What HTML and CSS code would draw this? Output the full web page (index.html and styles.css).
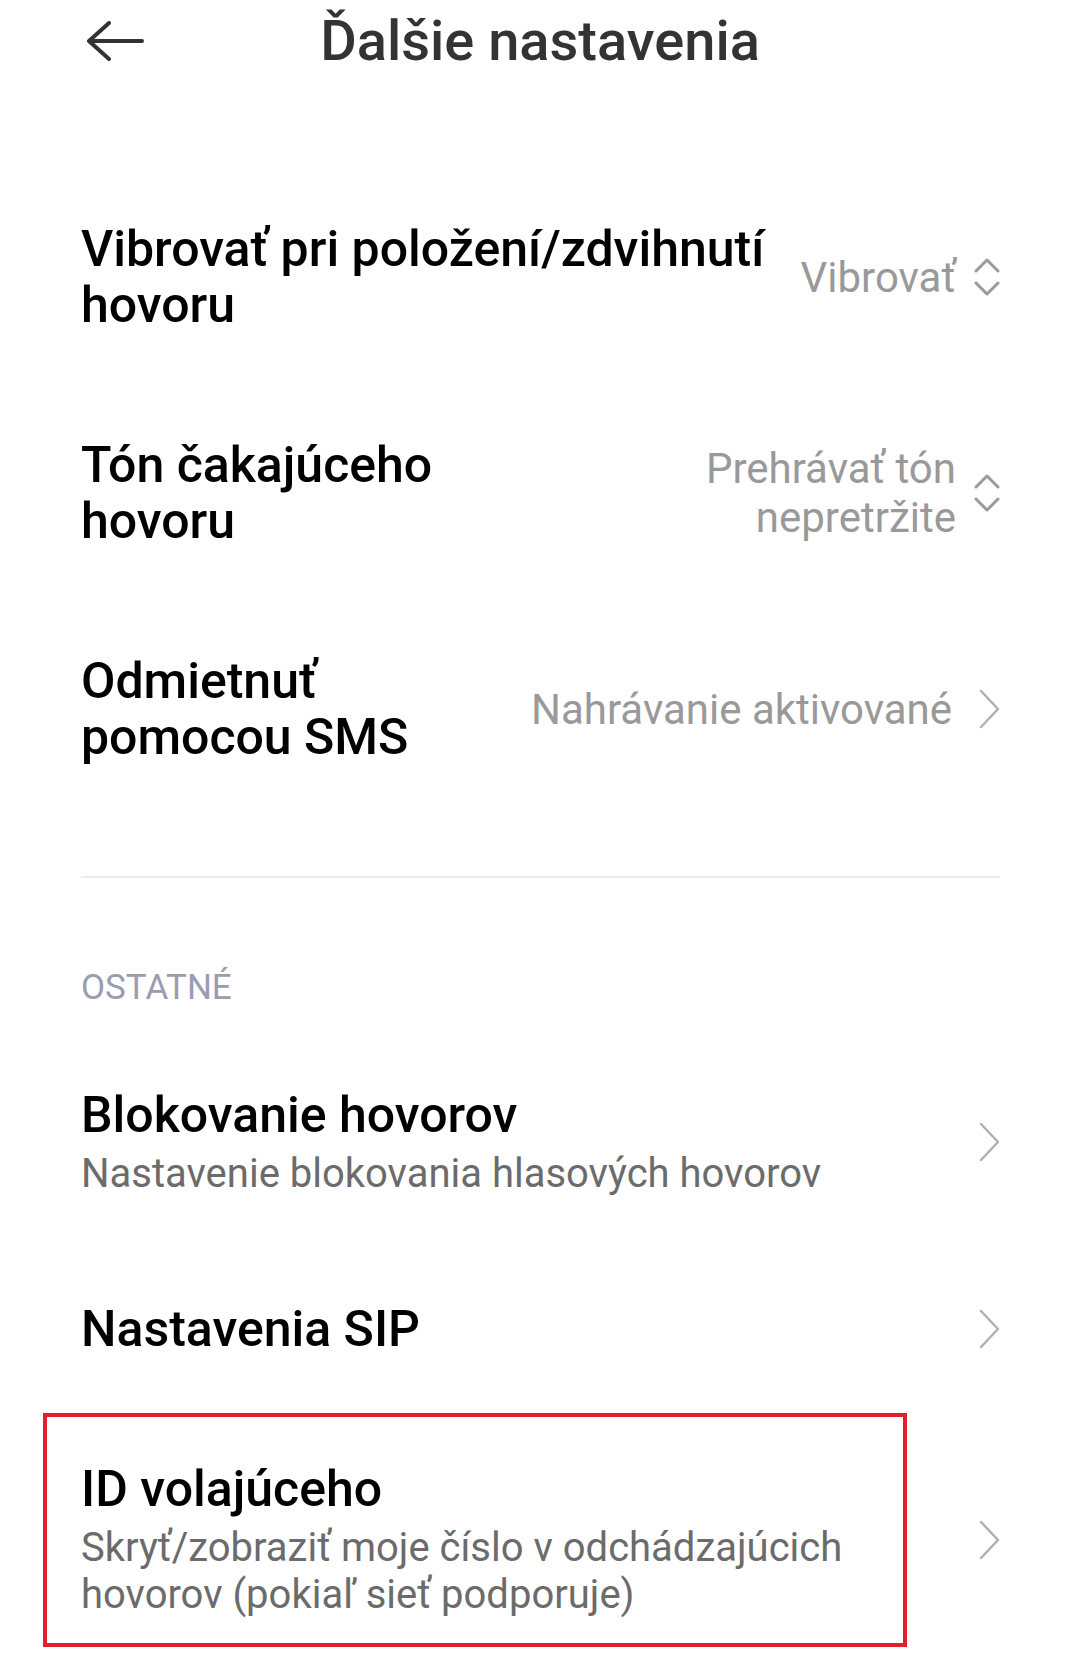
FILE: index.html
```html
<!DOCTYPE html>
<html lang="sk">
<head>
    <meta charset="UTF-8">
    <meta name="viewport" content="width=device-width, initial-scale=1.0">
    <title>Ďalšie nastavenia</title>
    <link rel="stylesheet" href="styles.css">
</head>
<body>
    <header class="topbar">
        <button class="back" aria-label="Späť">
            <svg width="58" height="40" viewBox="0 0 58 40">
                <path d="M3 20 H56 M23 2 L3 20 L23 38" fill="none" stroke="#333" stroke-width="4" stroke-linecap="round" stroke-linejoin="round"/>
            </svg>
        </button>
        <h1 class="page-title">Ďalšie nastavenia</h1>
        <span></span>
    </header>

    <main class="settings">
        <div class="row">
            <div class="row-text">
                <div class="row-title">Vibrovať pri položení/zdvihnutí<br>hovoru</div>
            </div>
            <div class="row-value">Vibrovať</div>
            <svg class="icon updown" viewBox="0 0 26 40">
                <path d="M2 14 L13 3 L24 14 M2 26 L13 37 L24 26" fill="none" stroke="#9a9a9a" stroke-width="3" stroke-linecap="round" stroke-linejoin="round"/>
            </svg>
        </div>

        <div class="row">
            <div class="row-text">
                <div class="row-title">Tón čakajúceho<br>hovoru</div>
            </div>
            <div class="row-value">Prehrávať tón<br>nepretržite</div>
            <svg class="icon updown" viewBox="0 0 26 40">
                <path d="M2 14 L13 3 L24 14 M2 26 L13 37 L24 26" fill="none" stroke="#9a9a9a" stroke-width="3" stroke-linecap="round" stroke-linejoin="round"/>
            </svg>
        </div>

        <div class="row">
            <div class="row-text">
                <div class="row-title">Odmietnuť<br>pomocou SMS</div>
            </div>
            <div class="row-value">Nahrávanie aktivované</div>
            <svg class="icon arrow" viewBox="0 0 28 40">
                <path d="M9 2 L26 20 L9 38" fill="none" stroke="#b0b0b0" stroke-width="2.5" stroke-linecap="round" stroke-linejoin="round"/>
            </svg>
        </div>

        <hr class="divider">

        <div class="section-label">OSTATNÉ</div>

        <div class="row">
            <div class="row-text">
                <div class="row-title">Blokovanie hovorov</div>
                <div class="row-sub">Nastavenie blokovania hlasových hovorov</div>
            </div>
            <svg class="icon arrow" viewBox="0 0 28 40">
                <path d="M9 2 L26 20 L9 38" fill="none" stroke="#b0b0b0" stroke-width="2.5" stroke-linecap="round" stroke-linejoin="round"/>
            </svg>
        </div>

        <div class="row">
            <div class="row-text">
                <div class="row-title">Nastavenia SIP</div>
            </div>
            <svg class="icon arrow" viewBox="0 0 28 40">
                <path d="M9 2 L26 20 L9 38" fill="none" stroke="#b0b0b0" stroke-width="2.5" stroke-linecap="round" stroke-linejoin="round"/>
            </svg>
        </div>

        <div class="row marked">
            <div class="row-text">
                <div class="row-title">ID volajúceho</div>
                <div class="row-sub">Skryť/zobraziť moje číslo v odchádzajúcich<br>hovorov (pokiaľ sieť podporuje)</div>
            </div>
            <svg class="icon arrow" viewBox="0 0 28 40">
                <path d="M9 2 L26 20 L9 38" fill="none" stroke="#b0b0b0" stroke-width="2.5" stroke-linecap="round" stroke-linejoin="round"/>
            </svg>
            <span class="highlight"></span>
        </div>
    </main>
</body>
</html>
```

FILE: styles.css
```css
body {
    margin: 0;
    font-family: Roboto, "Noto Sans", Arial, sans-serif;
    background: #fff;
    color: #000;
}

.topbar {
    display: grid;
    grid-template-columns: 1fr auto 1fr;
    align-items: center;
    height: 82px;
}

.back {
    justify-self: start;
    margin-left: 86px;
    padding: 0;
    border: none;
    background: none;
    display: flex;
}

.page-title {
    margin: 0;
    font-size: 56px;
    line-height: 64px;
    font-weight: 500;
    color: #333;
}

.settings {
    margin-top: 87px;
    padding: 0 80px 0 81px;
}

.row {
    display: flex;
    align-items: center;
    padding: 52px 0;
}

.row-text {
    flex: 1;
}

.row-title {
    font-size: 50px;
    line-height: 56px;
    font-weight: 500;
    color: #000;
}

.row-sub {
    margin-top: 7px;
    font-size: 40px;
    line-height: 47px;
    color: #6b6b6b;
}

.row-value {
    font-size: 42px;
    line-height: 49px;
    color: #999;
    text-align: right;
    white-space: nowrap;
}

.icon {
    flex: none;
    width: 28px;
    height: 40px;
    margin-left: 20px;
}

.icon.updown {
    width: 26px;
    margin-left: 18px;
}

.divider {
    margin: 59px 0 0;
    border: none;
    height: 2px;
    background: #ececec;
}

.section-label {
    padding: 90px 0 27px;
    font-size: 35px;
    line-height: 40px;
    color: #9a9cb0;
}

.marked {
    position: relative;
}

.highlight {
    position: absolute;
    top: 4px;
    left: -38px;
    width: 864px;
    height: 234px;
    box-sizing: border-box;
    border: 4px solid #e0202f;
}
```
